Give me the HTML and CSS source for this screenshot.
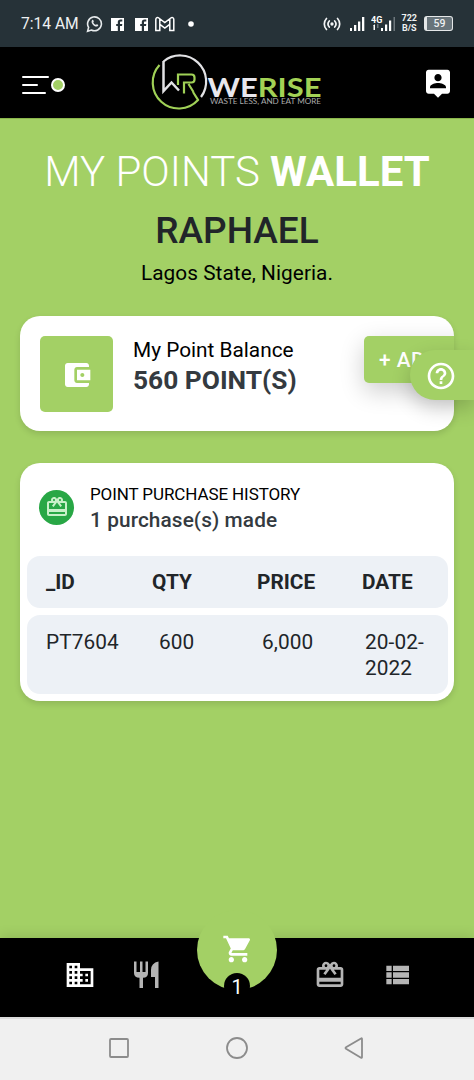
FILE: index.html
```html
<!DOCTYPE html>
<html lang="en">
<head>
    <meta charset="UTF-8">
    <meta name="viewport" content="width=device-width, initial-scale=1.0">
    <link rel="stylesheet" href="styles.css">
    <title>My Points Wallet</title>
</head>
<body>
    <div class="status-bar">
        <div class="status-left">
            <span class="clock">7:14 AM</span>
            <!-- notification icons -->
            <svg width="112" height="18" viewBox="0 0 112 18" fill="none">
                <path d="M1.6 16.2l1-3.8A6.9 6.9 0 1 1 5.4 15z" stroke="#e6eaec" stroke-width="1.6"/>
                <path d="M6 5.2c.9-.9 1.5.2 1.8 1.1.1.5-.6.8-.5 1.2.5 1.1 1.4 1.9 2.5 2.3.5.1.8-.8 1.3-.6 1.5.6 1.5 1 .7 1.8C9.4 13.200 4 8 6 5.200z" fill="#e6eaec"/>
                <path d="M25 3h13v13h-4v-5h2l.3-2H34V7.500c0-.7.3-1 1-1h1.300V4.600h-1.800c-1.700 0-2.700 1-2.700 2.700V9h-1.600v2h1.600v5H25z" fill="#fff"/>
                <path d="M49 3h13v13h-4v-5h2l.3-2H58V7.500c0-.7.3-1 1-1h1.300V4.600h-1.800c-1.700 0-2.700 1-2.700 2.700V9h-1.600v2h1.600v5H49z" fill="#fff"/>
                <path d="M69.800 15.500V4.500c0-2 1.800-2.400 3-1.500l6 4.600 6-4.600c1.200-.9 3-.5 3 1.500v11h-4V9.300l-5 3.800-5-3.800v6.200zM73.800 9.300V4M83.800 9.300V4" stroke="#fff" stroke-width="1.500"/>
                <circle cx="105" cy="9" r="2.800" fill="#fff"/>
            </svg>
        </div>
        <div class="status-right">
            <svg width="18" height="14" viewBox="0 0 18 14" fill="none" stroke="#f3f5f6" stroke-width="1.700" stroke-linecap="round">
                <path d="M3.500 1.500a8 8 0 0 0 0 11M6.300 4a4.500 4.500 0 0 0 0 6M14.500 1.500a8 8 0 0 1 0 11M11.700 4a4.500 4.500 0 0 1 0 6"/>
                <circle cx="9" cy="7" r=".8"/>
            </svg>
            <svg class="signal" width="15" height="15" viewBox="0 0 15 15" fill="#fff">
                <path d="M0 12h2v3H0zM4 9h2.300v6H4zM8 5.500h2.300V15H8zM12 1h2.300v14H12z"/>
            </svg>
            <svg class="signal-4g" width="26" height="18" viewBox="0 0 26 18" fill="#fff">
                <text x="0" y="8" class="tiny">4G</text>
                <path d="M2 10.500l2-1.300V15H2.500v-4zM10 13h2v3h-2zM14 9.500h2.200V16H14zM18 5.500h2.200V16H18z"/>
                <path d="M6 9h1.500v4H6zM22.500 2h1.500v14h-1.500z" fill="#6d777c"/>
            </svg>
            <div class="net-speed"><span>722</span><span>B/S</span></div>
            <div class="battery"><span>59</span></div>
        </div>
    </div>

    <header class="header">
        <div class="menu">
            <div class="menu-lines"><i></i><i></i><i></i></div>
            <span class="menu-dot"></span>
        </div>
        <svg class="logo" width="174" height="58" viewBox="150 53 174 58" fill="none">
            <g stroke-width="2.200">
                <path d="M159.500 64A26 26 0 0 0 198 99l-5-8" stroke="#a0d157"/>
                <path d="M163.500 60.500A26 26 0 0 1 201 96" stroke="#e2e2e5"/>
                <path d="M163.500 60v30l8-8.500 7.500 8" stroke="#e2e2e5" stroke-width="2.500"/>
                <path d="M178 84V73.500h13.500q3 0 3 3v2q0 3-3 3H184v11M188.500 83l5 8" stroke="#a0d157" stroke-width="2.200"/>
            </g>
            <text x="207.500" y="95.500" class="logo-name" textLength="114" lengthAdjust="spacingAndGlyphs"><tspan fill="#e8e7ed">WE</tspan><tspan fill="#a3d255">RISE</tspan></text>
            <text x="210" y="103" class="logo-tag" textLength="111" lengthAdjust="spacingAndGlyphs">WASTE LESS, AND EAT MORE</text>
        </svg>
        <svg class="icon" viewBox="0 0 24 24"><path d="M19 2H5c-1.110 0-2 .9-2 2v14c0 1.100.890 2 2 2h4l3 3 3-3h4c1.100 0 2-.9 2-2V4c0-1.100-.9-2-2-2zm-7 3.300c1.490 0 2.700 1.210 2.700 2.700s-1.210 2.700-2.700 2.700S9.300 9.490 9.300 8s1.210-2.700 2.700-2.700zM18 16H6v-.9c0-2 4-3.100 6-3.100s6 1.100 6 3.100v.9z"/></svg>
    </header>

    <main class="content">
        <h1 class="title">MY POINTS <b>WALLET</b></h1>
        <h2 class="name">RAPHAEL</h2>
        <p class="place">Lagos State, Nigeria.</p>

        <section class="card balance">
            <div class="wallet-box">
                <svg class="icon" viewBox="0 0 24 24"><path d="M21 18v1c0 1.100-.9 2-2 2H5c-1.110 0-2-.9-2-2V5c0-1.100.890-2 2-2h14c1.100 0 2 .9 2 2v1h-9c-1.110 0-2 .9-2 2v8c0 1.100.890 2 2 2h9zm-9-2h10V8H12v8zm4-2.500c-.83 0-1.500-.67-1.500-1.500s.67-1.500 1.500-1.500 1.500.67 1.500 1.500-.67 1.500-1.500 1.500z"/></svg>
            </div>
            <div class="balance-text">
                <p>My Point Balance</p>
                <strong>560 POINT(S)</strong>
            </div>
            <button class="add-btn">+ ADD</button>
        </section>

        <section class="card history">
            <div class="history-head">
                <div class="gift-badge">
                    <svg viewBox="0 0 24 24"><path d="M20 6h-2.180c.11-.31.18-.65.18-1 0-1.660-1.340-3-3-3-1.050 0-1.960.54-2.500 1.350l-.5.67-.5-.68C10.960 2.540 10.050 2 9 2 7.340 2 6 3.340 6 5c0 .35.07.69.18 1H4c-1.110 0-1.990.89-1.990 2L2 19c0 1.110.89 2 2 2h16c1.110 0 2-.89 2-2V8c0-1.110-.89-2-2-2zm-5-2c.55 0 1 .45 1 1s-.45 1-1 1-1-.45-1-1 .45-1 1-1zM9 4c.55 0 1 .45 1 1s-.45 1-1 1-1-.45-1-1 .45-1 1-1zm11 15H4v-2h16v2zm0-5H4V8h5.080L7 10.830 8.620 12 11 8.760l1-1.360 1 1.360L15.380 12 17 10.830 14.920 8H20v6z"/></svg>
                </div>
                <div>
                    <p class="history-title">POINT PURCHASE HISTORY</p>
                    <p class="history-count">1 purchase(s) made</p>
                </div>
            </div>
            <div class="row row-head">
                <span>_ID</span><span>QTY</span><span>PRICE</span><span>DATE</span>
            </div>
            <div class="row row-item">
                <span>PT7604</span><span>600</span><span>6,000</span><span>20-02-<br>2022</span>
            </div>
        </section>
    </main>

    <div class="help">
        <svg class="icon" viewBox="0 0 24 24"><path d="M11 18h2v-2h-2v2zm1-16C6.480 2 2 6.480 2 12s4.480 10 10 10 10-4.480 10-10S17.520 2 12 2zm0 18c-4.410 0-8-3.590-8-8s3.590-8 8-8 8 3.590 8 8-3.590 8-8 8zm0-14c-2.210 0-4 1.790-4 4h2c0-1.100.9-2 2-2s2 .9 2 2c0 2-3 1.750-3 5h2c0-2.250 3-2.500 3-5 0-2.210-1.790-4-4-4z"/></svg>
    </div>

    <nav class="bottom-nav">
        <div class="nav-group">
            <svg class="icon" viewBox="0 0 24 24"><path d="M12 7V3H2v18h20V7H12zM6 19H4v-2h2v2zm0-4H4v-2h2v2zm0-4H4V9h2v2zm0-4H4V5h2v2zm4 12H8v-2h2v2zm0-4H8v-2h2v2zm0-4H8V9h2v2zm0-4H8V5h2v2zm10 12h-8v-2h2v-2h-2v-2h2v-2h-2V9h8v10zm-2-8h-2v2h2v-2zm0 4h-2v2h2v-2z"/></svg>
            <svg class="icon dim" viewBox="0 0 32 32"><path d="M3 2.500h2.500V13H9V2.500h2.500V13H14.500V2.500H17V14q0 4.500-5 4.800V29H8.500V18.800Q3 18.500 3 14zM27.500 2.500V29H24V18h-4V11q0-7 7.500-8.500z"/></svg>
        </div>
        <div class="cart">
            <svg class="icon" viewBox="0 0 24 24"><path d="M7 18c-1.100 0-1.990.9-1.990 2S5.900 22 7 22s2-.9 2-2-.9-2-2-2zM1 2v2h2l3.600 7.590-1.350 2.450c-.16.28-.25.61-.25.96 0 1.100.9 2 2 2h12v-2H7.420c-.14 0-.25-.11-.25-.25l.03-.12.9-1.630h7.450c.75 0 1.410-.41 1.750-1.030l3.580-6.490c.08-.14.12-.31.12-.48 0-.55-.45-1-1-1H5.210l-.94-2H1zm16 16c-1.100 0-1.990.9-1.990 2s.89 2 1.990 2 2-.9 2-2-.9-2-2-2z"/></svg>
            <span class="cart-count">1</span>
        </div>
        <div class="nav-group">
            <svg class="icon dim" viewBox="0 0 24 24"><path d="M20 6h-2.180c.11-.31.18-.65.18-1 0-1.660-1.340-3-3-3-1.050 0-1.960.54-2.500 1.350l-.5.67-.5-.68C10.960 2.540 10.050 2 9 2 7.340 2 6 3.340 6 5c0 .35.07.69.18 1H4c-1.110 0-1.990.89-1.990 2L2 19c0 1.110.89 2 2 2h16c1.110 0 2-.89 2-2V8c0-1.110-.89-2-2-2zm-5-2c.55 0 1 .45 1 1s-.45 1-1 1-1-.45-1-1 .45-1 1-1zM9 4c.55 0 1 .45 1 1s-.45 1-1 1-1-.45-1-1 .45-1 1-1zm11 15H4v-2h16v2zm0-5H4V8h5.080L7 10.830 8.620 12 11 8.760l1-1.360 1 1.360L15.380 12 17 10.830 14.920 8H20v6z"/></svg>
            <svg class="icon dim" viewBox="0 0 24 24"><path d="M4 14h4v-4H4v4zm0 5h4v-4H4v4zM4 9h4V5H4v4zm5 5h12v-4H9v4zm0 5h12v-4H9v4zM9 5v4h12V5H9z"/></svg>
        </div>
    </nav>

    <div class="system-nav">
        <svg viewBox="0 0 24 24"><rect x="3" y="3" width="18" height="18" rx="1"/></svg>
        <svg viewBox="0 0 24 24"><circle cx="12" cy="12" r="10"/></svg>
        <svg viewBox="0 0 24 24"><path d="M18 2.500q1-.8 1 .5v18q0 1.300-1 .7L3 12.800q-1-.8 0-1.500z"/></svg>
    </div>
</body>
</html>
```
FILE: styles.css
```css
* {
    box-sizing: border-box;
}

body {
    display: flex;
    flex-direction: column;
    height: 100vh;
    margin: 0;
    font-family: Roboto, sans-serif;
    color: #000;
    background-color: #a3d065;
    overflow: hidden;
}

h1, h2, p {
    margin: 0;
}

.icon {
    display: block;
    width: 32px;
    height: 32px;
    fill: #fff;
}

.dim {
    fill: #b5b5b5;
}

/* phone status bar */
.status-bar {
    display: flex;
    justify-content: space-between;
    align-items: center;
    flex: none;
    height: 47px;
    padding: 0 21px;
    background-color: #263238;
    color: #eef1f2;
}

.status-left, .status-right {
    display: flex;
    align-items: center;
}

.status-left {
    gap: 7px;
}

.clock {
    font-size: 15.6px;
    white-space: nowrap;
}

.signal {
    margin-left: 9px;
}

.signal-4g {
    margin-left: 6px;
}

.tiny {
    font-size: 9px;
    font-weight: bold;
}

.net-speed {
    display: flex;
    flex-direction: column;
    align-items: center;
    margin: 0 7px 0 5px;
    font-size: 9px;
    font-weight: bold;
    line-height: 9.5px;
}

.battery {
    width: 29px;
    height: 15px;
    border: 1.5px solid #e4e7e8;
    border-left-width: 3px;
    border-radius: 3px;
    background-color: #68747a;
    font-size: 10.5px;
    font-weight: 500;
    line-height: 13px;
    text-align: center;
}

/* app header */
.header {
    display: flex;
    justify-content: space-between;
    align-items: center;
    flex: none;
    height: 72px;
    padding: 0 20px 0 22px;
    background-color: #000;
    border-bottom: 1px solid #8ab64b;
}

.menu {
    display: flex;
    align-items: center;
    gap: 2px;
    width: 43px;
    padding-top: 4px;
}

.menu-lines {
    display: flex;
    flex-direction: column;
    gap: 6px;
    width: 27px;
}

.menu-lines i {
    height: 2px;
    width: 27px;
    border-radius: 1px;
    background-color: #fff;
}

.menu-lines i:nth-child(2) {
    width: 16px;
}

.menu-lines i:nth-child(3) {
    width: 24px;
}

.menu-dot {
    flex: none;
    width: 14px;
    height: 14px;
    border: 2.5px solid #fff;
    border-radius: 50%;
    background-color: #a3d065;
}

.logo {
    margin-right: 14px;
}

.logo-name {
    font-family: Lato, sans-serif;
    font-size: 27px;
    font-weight: 700;
}

.logo-tag {
    font-family: Lato, sans-serif;
    font-size: 7px;
    fill: #aaa;
}

/* page */
.content {
    flex: 1;
    padding: 27px 20px 0;
    text-align: center;
}

.title {
    font-size: 42px;
    font-weight: 300;
    line-height: 52px;
    color: #fff;
    white-space: nowrap;
}

.title b {
    font-weight: 700;
}

.name {
    margin-top: 10px;
    font-size: 37px;
    font-weight: 500;
    line-height: 46px;
    color: #212529;
}

.place {
    margin-top: 4px;
    font-size: 20.8px;
    line-height: 30px;
    letter-spacing: 0.05px;
}

.card {
    border-radius: 20px;
    background-color: #fff;
    box-shadow: 0 3px 6px rgba(0, 0, 0, 0.12);
    text-align: left;
    overflow: hidden;
}

.balance {
    display: flex;
    align-items: flex-start;
    height: 115px;
    margin-top: 28px;
    padding: 20px 0 0 20px;
}

.wallet-box {
    display: flex;
    flex: none;
    justify-content: center;
    align-items: center;
    width: 73px;
    height: 76px;
    padding-top: 1px;
    border-radius: 5px;
    background-color: #a3d065;
}

.balance-text {
    flex: none;
    width: 251px;
    padding-left: 20px;
    font-size: 20.8px;
    line-height: 29px;
}

.balance-text strong {
    font-size: 26.3px;
    font-weight: 700;
    line-height: 30px;
    color: #343a40;
}

.add-btn {
    flex: none;
    width: 105px;
    height: 47px;
    padding: 0 0 0 15px;
    border: 0;
    border-radius: 5px;
    background-color: #a3d065;
    box-shadow: 0 8px 24px rgba(0, 0, 0, 0.2);
    color: #fff;
    font-family: inherit;
    font-size: 20.8px;
    font-weight: 500;
    letter-spacing: 0.5px;
    text-align: left;
}

.history {
    height: 238px;
    margin-top: 32px;
    padding: 18px 6px 0 7px;
}

.history-head {
    display: flex;
    align-items: center;
    gap: 16px;
    height: 52px;
    margin-bottom: 23px;
    padding-left: 12px;
}

.gift-badge {
    display: flex;
    justify-content: center;
    align-items: center;
    width: 35px;
    height: 35px;
    border-radius: 50%;
    background-color: #28a745;
}

.gift-badge svg {
    width: 24px;
    height: 24px;
    fill: #c8f0c8;
}

.history-title {
    font-size: 17px;
    line-height: 26px;
    letter-spacing: -0.1px;
}

.history-count {
    font-size: 20.8px;
    font-weight: 500;
    line-height: 26px;
    letter-spacing: 0.1px;
    color: #343a40;
}

.row {
    display: grid;
    border-radius: 13px;
    background-color: #edf1f6;
    padding-left: 19px;
    font-size: 20.8px;
    line-height: 26px;
    color: #212529;
}

.row-head {
    grid-template-columns: 106px 105px 105px 1fr;
    height: 52px;
    padding-top: 13px;
    font-weight: 700;
}

.row-item {
    grid-template-columns: 113px 103px 103px 1fr;
    height: 79px;
    margin-top: 7px;
    padding-top: 14px;
    letter-spacing: 0.1px;
}

/* floating help tab on the right edge */
.help {
    position: absolute;
    top: 350px;
    right: 0;
    width: 64px;
    height: 50px;
    padding: 10px 0 0 15px;
    border-radius: 25px 0 0 25px;
    background-color: #a3d065;
    box-shadow: 0 8px 20px rgba(0, 0, 0, 0.2);
}

/* bottom navigation */
.bottom-nav {
    display: flex;
    justify-content: space-between;
    flex: none;
    height: 79px;
    padding: 0 61px 0 64px;
    background-color: #000;
    box-shadow: 0 -2px 12px rgba(0, 0, 0, 0.12);
}

.nav-group {
    display: flex;
    gap: 35px;
    padding-top: 21px;
}

.cart {
    position: relative;
    width: 80px;
    height: 80px;
    margin: -28px 3px 0 0;
    padding: 23px 0 0 25px;
    border-radius: 50%;
    background-color: #a3d065;
}

.cart-count {
    position: absolute;
    left: 27px;
    bottom: -9px;
    width: 26px;
    height: 26px;
    border-radius: 50%;
    background-color: #000;
    color: #fff;
    font-size: 20px;
    line-height: 28px;
    text-align: center;
}

.system-nav {
    display: flex;
    justify-content: center;
    gap: 94px;
    flex: none;
    height: 63px;
    padding-top: 17px;
    border-top: 2px solid #dcdcdc;
    background-color: #f0f0f0;
}

.system-nav svg {
    width: 24px;
    height: 24px;
    fill: none;
    stroke: #8c8c8c;
    stroke-width: 1.8;
}
```
